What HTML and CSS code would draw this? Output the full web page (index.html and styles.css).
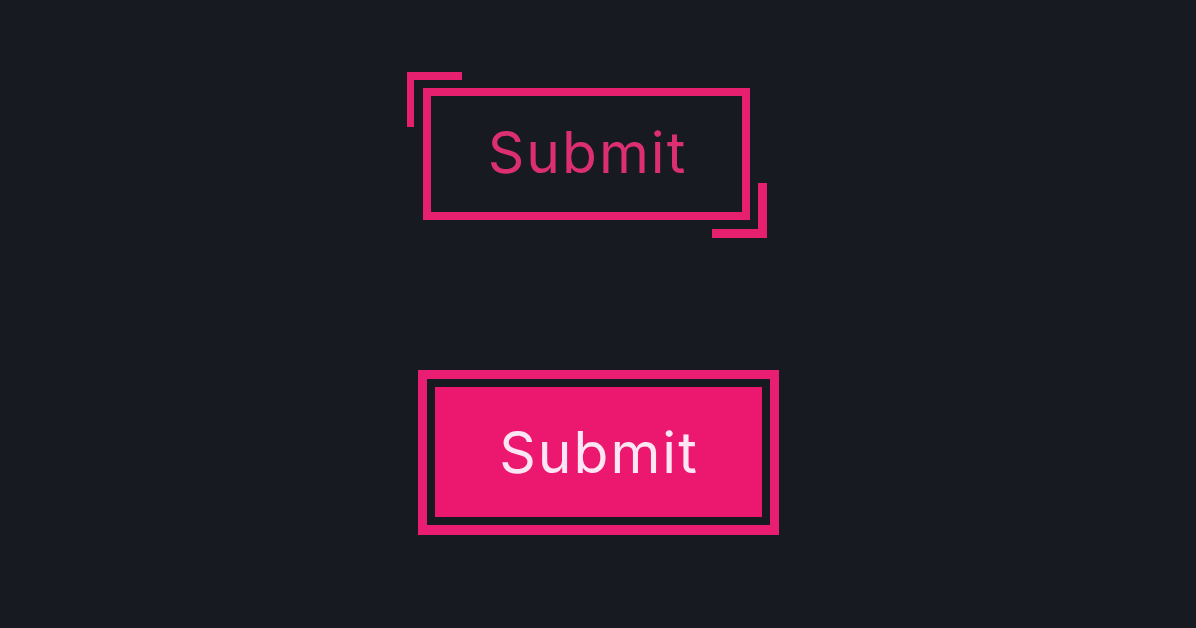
FILE: index.html
```html
<!DOCTYPE html>
<html>
<head>
<meta charset="utf-8">
<link rel="stylesheet" href="styles.css">
</head>
<body>
<main class="stage">
  <div class="btn-corners">
    <span class="corner corner-tl"></span>
    <button class="btn-outline">Submit</button>
    <span class="corner corner-br"></span>
  </div>
  <div class="btn-double">
    <button class="btn-fill">Submit</button>
  </div>
</main>
</body>
</html>
```
FILE: styles.css
```css
html, body {
  margin: 0;
  padding: 0;
  background: #181a22;
  width: 1196px;
  height: 628px;
  overflow: hidden;
}
.stage {
  display: flex;
  flex-direction: column;
  align-items: center;
  padding-top: 72px;
  gap: 132px;
  font-family: Inter, "Noto Sans", sans-serif;
}
.btn-corners {
  position: relative;
  width: 360px;
  height: 166px;
  box-sizing: border-box;
  padding: 16px 17px 18px 16px;
  margin-right: 22px;
}
.corner {
  position: absolute;
  width: 55px;
  height: 55px;
  box-sizing: border-box;
  border-color: #e6206f;
  border-style: solid;
  border-width: 0;
}
.corner-tl {
  left: 0;
  top: 0;
  border-top-width: 8px;
  border-left-width: 7px;
}
.corner-br {
  right: 0;
  bottom: 0;
  border-bottom-width: 9px;
  border-right-width: 9px;
}
.btn-outline {
  display: flex;
  align-items: center;
  justify-content: center;
  width: 327px;
  height: 132px;
  box-sizing: border-box;
  margin: 0;
  background: transparent;
  border: 8px solid #e6206f;
  color: #dc2f70;
  font-family: inherit;
  font-size: 57px;
  font-weight: 400;
  letter-spacing: 2px;
  padding: 0 0 4px 2px;
}
.btn-double {
  border: 9px solid #e91e72;
  border-bottom-width: 10px;
  padding: 8px;
  background: #181a22;
}
.btn-fill {
  display: flex;
  align-items: center;
  justify-content: center;
  width: 327px;
  height: 130px;
  margin: 0;
  border: 0;
  background: #ec1870;
  color: #fce6f3;
  font-family: inherit;
  font-size: 57px;
  font-weight: 400;
  letter-spacing: 2px;
  padding: 0 0 0 2px;
}
```
